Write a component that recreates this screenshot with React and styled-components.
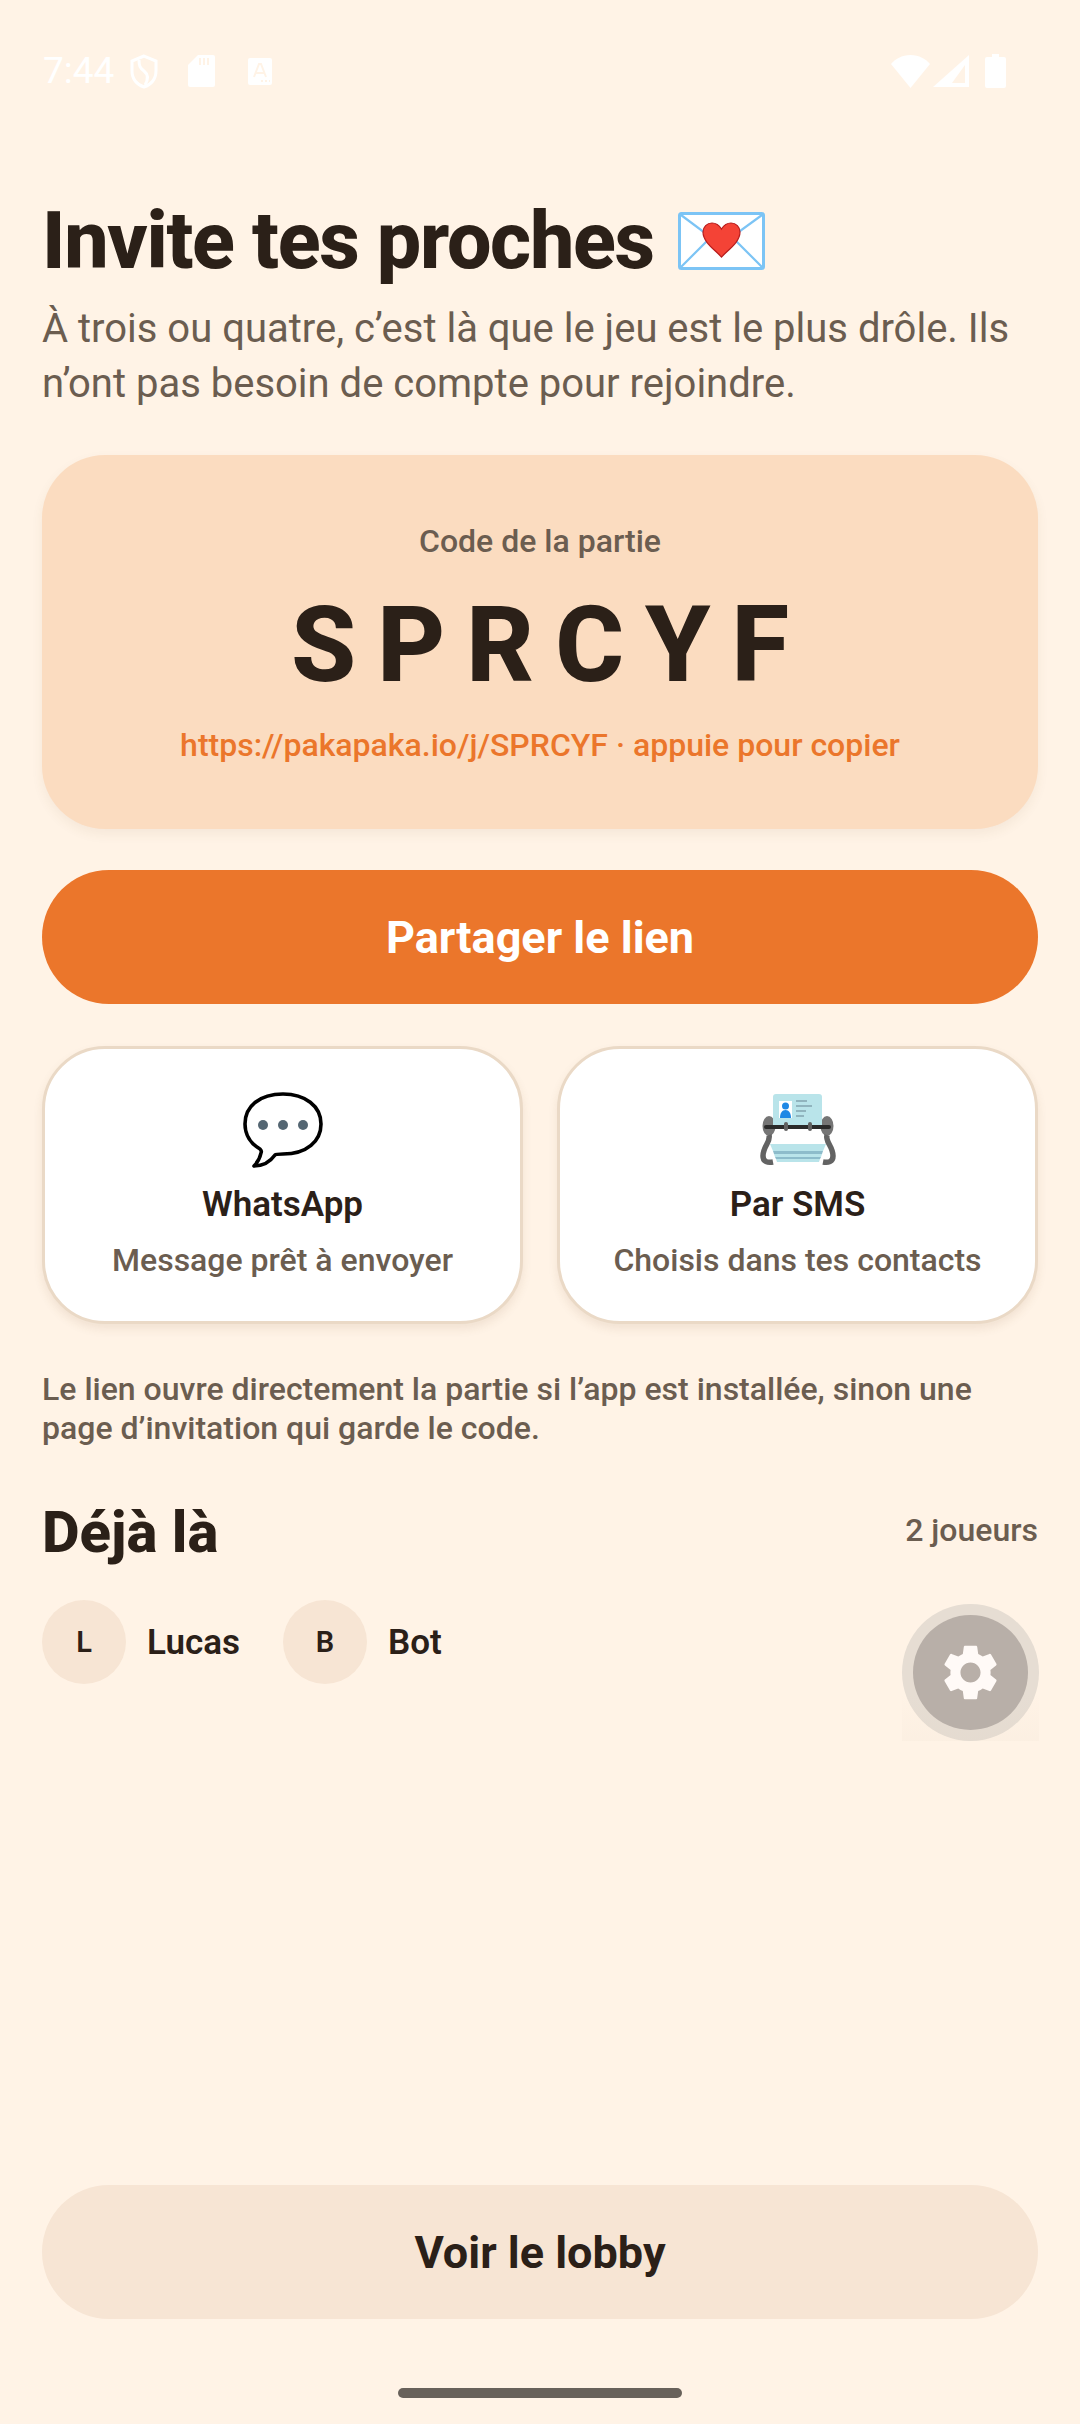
import React from 'react';
import styled, { createGlobalStyle } from 'styled-components';

const colors = {
  bg: '#FFF3E6',
  ink: '#2B2018',
  muted: '#6B5D50',
  orange: '#EB762B',
  peach: '#FBDCC0',
  sand: '#F7E5D4',
  line: '#EAD9C6',
};

const GlobalStyle = createGlobalStyle`
  html, body {
    margin: 0;
    padding: 0;
    background: ${colors.bg};
    font-family: Roboto, "Liberation Sans", sans-serif;
  }
  * { box-sizing: border-box; }
`;

const Page = styled.div`
  position: relative;
  width: 1080px;
  height: 2424px;
  overflow: hidden;
  display: flex;
  flex-direction: column;
  background: ${colors.bg};
  color: ${colors.ink};
`;

const StatusBar = styled.div`
  height: 191px;
  padding: 52px 74px 0 43px;
  display: flex;
  align-items: flex-start;
  justify-content: space-between;
  flex-shrink: 0;
`;

const StatusGroup = styled.div`
  height: 38px;
  display: flex;
  align-items: center;
  gap: ${(p) => p.$gap || 0}px;
`;

const Clock = styled.span`
  font-size: 37px;
  line-height: 38px;
  color: #fff;
  margin-right: 16px;
  width: 71px;
`;

const BatterySlot = styled.span`
  display: flex;
  margin-left: 13px;
`;

const TranslateSlot = styled.span`
  display: flex;
  margin-left: 3px;
`;

const Content = styled.main`
  flex: 1;
  padding: 0 42px 105px;
  display: flex;
  flex-direction: column;
`;

const Title = styled.h1`
  margin: 0;
  font-size: 79px;
  line-height: 100px;
  font-weight: 800;
  letter-spacing: -1.3px;
  display: flex;
  align-items: center;
  gap: 24px;
`;

const Subtitle = styled.p`
  margin: 10px 0 0;
  font-size: 40px;
  line-height: 55px;
  color: ${colors.muted};
`;

const CodeCard = styled.section`
  margin-top: 44px;
  height: 374px;
  border-radius: 63px;
  background: ${colors.peach};
  box-shadow: 0 5px 12px rgba(120, 80, 40, 0.07);
  display: flex;
  flex-direction: column;
  align-items: center;
  padding-top: 66px;
`;

const CodeLabel = styled.div`
  font-size: 32px;
  line-height: 40px;
  font-weight: 500;
  color: ${colors.muted};
`;

const CodeValue = styled.div`
  margin-top: 23px;
  font-size: 105px;
  line-height: 124px;
  font-weight: 800;
  letter-spacing: 21px;
  margin-right: -21px;
`;

const CodeLink = styled.div`
  margin-top: 17px;
  font-size: 32px;
  line-height: 40px;
  font-weight: 500;
  color: ${colors.orange};
`;

const PrimaryButton = styled.button`
  margin-top: ${(p) => (p.$soft ? 0 : 41)}px;
  height: 134px;
  width: 100%;
  border: 0;
  border-radius: 67px;
  background: ${(p) => (p.$soft ? colors.sand : colors.orange)};
  color: ${(p) => (p.$soft ? colors.ink : '#fff')};
  font-family: inherit;
  font-size: 45px;
  font-weight: 700;
  flex-shrink: 0;
`;

const ShareGrid = styled.div`
  margin-top: 42px;
  display: grid;
  grid-template-columns: 1fr 1fr;
  gap: 34px;
`;

const ShareCard = styled.div`
  height: 278px;
  border: 3px solid ${colors.line};
  border-radius: 63px;
  background: #fff;
  box-shadow: 0 5px 10px rgba(120, 80, 40, 0.1);
  display: flex;
  flex-direction: column;
  align-items: center;
  padding-top: 42px;
`;

const ShareIcon = styled.div`
  width: 84px;
  height: 78px;
  display: flex;
  align-items: center;
  justify-content: center;
`;

const ShareTitle = styled.div`
  margin-top: 14px;
  font-size: 35px;
  line-height: 44px;
  font-weight: 600;
`;

const ShareHint = styled.div`
  margin-top: 13px;
  font-size: 32px;
  line-height: 40px;
  font-weight: 500;
  color: ${colors.muted};
`;

const Note = styled.p`
  margin: 46px 0 0;
  font-size: 32px;
  line-height: 39px;
  font-weight: 500;
  color: ${colors.muted};
`;

const SectionHead = styled.div`
  margin-top: 49px;
  display: flex;
  align-items: center;
  justify-content: space-between;
`;

const SectionTitle = styled.h2`
  margin: 0;
  font-size: 58px;
  line-height: 70px;
  font-weight: 800;
`;

const PlayerCount = styled.span`
  padding-bottom: 4px;
  font-size: 32px;
  font-weight: 500;
  color: ${colors.muted};
`;

const Players = styled.div`
  margin-top: 33px;
  display: flex;
  gap: 43px;
`;

const Player = styled.div`
  display: flex;
  align-items: center;
  gap: 21px;
`;

const Avatar = styled.div`
  width: 84px;
  height: 84px;
  border-radius: 50%;
  background: ${colors.sand};
  display: flex;
  align-items: center;
  justify-content: center;
  font-size: 29px;
  font-weight: 600;
`;

const PlayerName = styled.span`
  font-size: 35px;
  font-weight: 600;
`;

const BottomAction = styled.div`
  margin-top: auto;
`;

const Fab = styled.div`
  position: absolute;
  left: 902px;
  top: 1604px;
  width: 137px;
  height: 137px;
  border-radius: 50%;
  background: #e6ddd3;
  display: flex;
  align-items: center;
  justify-content: center;

  &::before {
    content: '';
    position: absolute;
    left: 0;
    right: 0;
    top: 90px;
    bottom: 0;
    background: linear-gradient(rgba(214, 196, 176, 0), rgba(214, 196, 176, 0.08));
  }
`;

const FabInner = styled.div`
  position: relative;
  width: 115px;
  height: 115px;
  border-radius: 50%;
  background: #b8afa8;
  display: flex;
  align-items: center;
  justify-content: center;
`;

const HomeBar = styled.div`
  position: absolute;
  left: 398px;
  bottom: 26px;
  width: 284px;
  height: 10px;
  border-radius: 5px;
  background: #68615a;
`;

function EnvelopeEmoji() {
  return (
    <svg width="87" height="58" viewBox="0 0 87 58">
      <rect x="1.5" y="1.5" width="84" height="55" rx="2" fill="#fff" stroke="#7CC4F5" strokeWidth="3" />
      <path d="M3 3l40 30L84 3M3 55l27-27M84 55L57 28" fill="none" stroke="#7CC4F5" strokeWidth="2.2" />
      <path d="M43.500 45C36 37 25 30 25 20c0-5 4-9 9-9 4 0 7 2 9.500 6 2.500-4 5.500-6 9.500-6 5 0 9 4 9 9 0 10-11 17-18.500 25z" fill="#F44336" stroke="#B71C1C" strokeWidth="1.2" />
    </svg>
  );
}

function BubbleEmoji() {
  return (
    <svg width="80" height="76" viewBox="0 0 80 76">
      <path d="M40 2C17 2 2 14 2 32c0 11 6 20 15 25 1 1 2 2 1 4-1 5-3 9-7 13 9 0 16-4 21-11 1-1 2-1 8-1 24 0 38-13 38-30C78 14 62 2 40 2z" fill="#fff" stroke="#000" strokeWidth="3.6" strokeLinejoin="round" />
      <circle cx="20" cy="33" r="5" fill="#546672" />
      <circle cx="40" cy="33" r="5" fill="#546672" />
      <circle cx="60" cy="33" r="5" fill="#546672" />
    </svg>
  );
}

function RolodexEmoji() {
  return (
    <svg width="76" height="72" viewBox="0 0 76 72">
      <ellipse cx="9" cy="32" rx="6.500" ry="10" fill="#757575" />
      <ellipse cx="67" cy="32" rx="6.500" ry="10" fill="#757575" />
      <path d="M9 41c2 7-6 11-6 21 0 6 5 7 10 6" fill="none" stroke="#636363" strokeWidth="5.500" />
      <path d="M67 41c-2 7 6 11 6 21 0 6-5 7-10 6" fill="none" stroke="#636363" strokeWidth="5.500" />
      <path d="M13 3a3 3 0 0 1 3-3h43a3 3 0 0 1 3 3v29H13z" fill="#B9E4EA" />
      <rect x="19" y="7" width="13" height="17" fill="#fff" />
      <circle cx="25.500" cy="12" r="3.500" fill="#1E88E5" />
      <path d="M20 24c0-5 2-8 5.500-8s5.500 3 5.500 8z" fill="#1E88E5" />
      <path d="M36 7h11M36 12h16M36 17h10M36 22h8" stroke="#90B4BE" strokeWidth="2" />
      <rect x="4" y="31" width="67" height="4" rx="2" fill="#2a2a2a" />
      <rect x="24" y="28" width="4" height="9" rx="2" fill="#616161" />
      <rect x="48" y="28" width="4" height="9" rx="2" fill="#616161" />
      <path d="M10 50h56l-3 7H13z" fill="#B9E4EA" />
      <path d="M13 57h50l-1 3H14z" fill="#8DBCCB" />
      <path d="M14 60h48l-1 3H15z" fill="#B9E4EA" />
      <path d="M15 63h46l-1 2H16z" fill="#8DBCCB" />
      <path d="M16 65h44l-1 3H17z" fill="#B9E4EA" />
    </svg>
  );
}

function GearIcon() {
  return (
    <svg width="67" height="67" viewBox="0 0 24 24" fill="#FFFAF7">
      <path d="M19.14 12.94c.04-.3.06-.61.06-.94 0-.32-.02-.64-.07-.94l2.03-1.58c.18-.14.23-.41.12-.61l-1.92-3.32c-.12-.22-.37-.29-.59-.22l-2.39.96c-.5-.38-1.03-.7-1.62-.94l-.36-2.54c-.04-.24-.24-.41-.48-.41h-3.84c-.24 0-.43.17-.47.41l-.36 2.54c-.59.24-1.13.57-1.62.94l-2.39-.96c-.22-.08-.47 0-.59.22L2.74 8.87c-.12.21-.08.47.12.61l2.03 1.58c-.05.3-.09.63-.09.94s.02.64.07.94l-2.03 1.58c-.18.14-.23.41-.12.61l1.92 3.32c.12.22.37.29.59.22l2.39-.96c.5.38 1.03.7 1.62.94l.36 2.54c.05.24.24.41.48.41h3.84c.24 0 .44-.17.47-.41l.36-2.54c.59-.24 1.13-.56 1.62-.94l2.39.96c.22.08.47 0 .59-.22l1.92-3.32c.12-.22.07-.47-.12-.61l-2.01-1.58zM12 15.6c-1.98 0-3.6-1.62-3.6-3.6s1.62-3.6 3.6-3.6 3.6 1.62 3.6 3.6-1.62 3.6-3.6 3.6z" />
    </svg>
  );
}

function ShieldIcon() {
  return (
    <svg width="28" height="35" viewBox="0 0 28 35" fill="none" stroke="#fff" strokeWidth="3">
      <path d="M14 2L2 7v10c0 8 5 14 12 16 7-2 12-8 12-16V7z" />
      <path d="M9 6c0 6 1 8 5 11 5 4 4 9 1 14" />
    </svg>
  );
}

function SdIcon() {
  return (
    <svg width="27" height="32" viewBox="0 0 27 32" fill="#fff">
      <path d="M10 0h15a2 2 0 0 1 2 2v28a2 2 0 0 1-2 2H2a2 2 0 0 1-2-2V10z" />
      <path d="M11 3h2v7h-2zM15 3h2v7h-2zM19 3h2v7h-2z" fill={colors.bg} />
    </svg>
  );
}

function TranslateIcon() {
  return (
    <svg width="24" height="27" viewBox="0 0 24 27">
      <rect width="24" height="27" rx="2" fill="#fff" />
      <path d="M6 19l5-13h2l5 13M8 15h8" fill="none" stroke={colors.bg} strokeWidth="2" />
      <path d="M13 23h2M17 23h2M21 23h1" stroke={colors.bg} strokeWidth="2" />
    </svg>
  );
}

function WifiIcon() {
  return (
    <svg width="39" height="33" viewBox="0 0 39 33" fill="#fff">
      <path d="M19.5 33L0 9C4 4 11 0 19.5 0S35 4 39 9z" />
    </svg>
  );
}

function SignalIcon() {
  return (
    <svg width="36" height="32" viewBox="0 0 36 32">
      <path fillRule="evenodd" fill="#fff" d="M36 0v32H0zM32 10L19 28h13z" />
    </svg>
  );
}

function BatteryIcon() {
  return (
    <svg width="21" height="34" viewBox="0 0 21 34" fill="#fff">
      <path d="M7 0h7v3h5a2 2 0 0 1 2 2v27a2 2 0 0 1-2 2H2a2 2 0 0 1-2-2V5a2 2 0 0 1 2-2h5z" />
    </svg>
  );
}

const players = [
  { initial: 'L', name: 'Lucas' },
  { initial: 'B', name: 'Bot' },
];

export default function App() {
  return (
    <Page>
      <GlobalStyle />
      <StatusBar>
        <StatusGroup $gap={30}>
          <StatusGroup>
            <Clock>7:44</Clock>
            <ShieldIcon />
          </StatusGroup>
          <SdIcon />
          <TranslateSlot><TranslateIcon /></TranslateSlot>
        </StatusGroup>
        <StatusGroup $gap={3}>
          <WifiIcon />
          <SignalIcon />
          <BatterySlot><BatteryIcon /></BatterySlot>
        </StatusGroup>
      </StatusBar>
      <Content>
        <Title>
          Invite tes proches <EnvelopeEmoji />
        </Title>
        <Subtitle>
          À trois ou quatre, c’est là que le jeu est le plus drôle. Ils n’ont pas besoin de compte pour rejoindre.
        </Subtitle>
        <CodeCard>
          <CodeLabel>Code de la partie</CodeLabel>
          <CodeValue>SPRCYF</CodeValue>
          <CodeLink>https://pakapaka.io/j/SPRCYF · appuie pour copier</CodeLink>
        </CodeCard>
        <PrimaryButton>Partager le lien</PrimaryButton>
        <ShareGrid>
          <ShareCard>
            <ShareIcon><BubbleEmoji /></ShareIcon>
            <ShareTitle>WhatsApp</ShareTitle>
            <ShareHint>Message prêt à envoyer</ShareHint>
          </ShareCard>
          <ShareCard>
            <ShareIcon><RolodexEmoji /></ShareIcon>
            <ShareTitle>Par SMS</ShareTitle>
            <ShareHint>Choisis dans tes contacts</ShareHint>
          </ShareCard>
        </ShareGrid>
        <Note>
          Le lien ouvre directement la partie si l’app est installée, sinon une page d’invitation qui garde le code.
        </Note>
        <SectionHead>
          <SectionTitle>Déjà là</SectionTitle>
          <PlayerCount>2 joueurs</PlayerCount>
        </SectionHead>
        <Players>
          {players.map((player) => (
            <Player key={player.name}>
              <Avatar>{player.initial}</Avatar>
              <PlayerName>{player.name}</PlayerName>
            </Player>
          ))}
        </Players>
        <BottomAction>
          <PrimaryButton $soft>Voir le lobby</PrimaryButton>
        </BottomAction>
      </Content>
      <Fab>
        <FabInner><GearIcon /></FabInner>
      </Fab>
      <HomeBar />
    </Page>
  );
}
